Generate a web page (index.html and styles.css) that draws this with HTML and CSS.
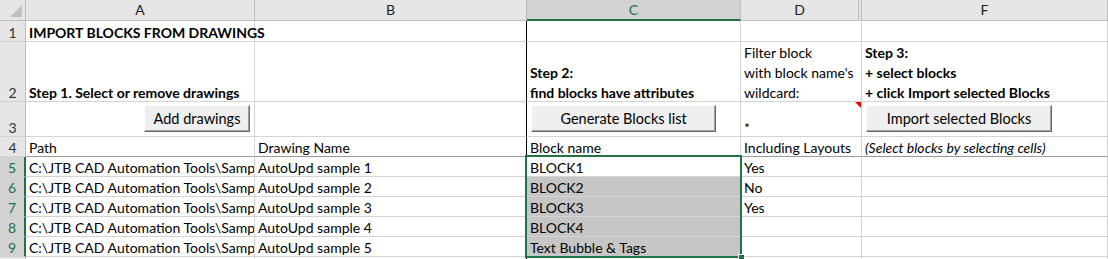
FILE: index.html
```html
<!doctype html>
<html lang="en">
<head>
    <meta charset="UTF-8">
    <title>Import blocks from drawings</title>
    <link rel="stylesheet" href="styles.css">
</head>
<body>
<div class="sheet">
    <!-- column headers -->
    <div class="corner"><span class="corner-tri"></span></div>
    <div class="colhead">A</div>
    <div class="colhead">B</div>
    <div class="colhead sel">C</div>
    <div class="colhead col-d">D</div>
    <div class="colhead">F</div>

    <!-- row 1 -->
    <div class="rowhead">1</div>
    <div class="cell bold spill">IMPORT BLOCKS FROM DRAWINGS</div>
    <div class="cell edge"></div>
    <div class="cell"></div>
    <div class="cell"></div>
    <div class="cell"></div>

    <!-- row 2 -->
    <div class="rowhead">2</div>
    <div class="cell bold">Step 1. Select or remove drawings</div>
    <div class="cell edge"></div>
    <div class="cell bold multi"><span class="lines">Step 2:<br>find blocks have attributes</span></div>
    <div class="cell multi"><span class="lines">Filter block<br>with block name's<br>wildcard:</span></div>
    <div class="cell bold multi"><span class="lines">Step 3:<br>+ select blocks<br>+ click Import selected Blocks</span></div>

    <!-- row 3 -->
    <div class="rowhead">3</div>
    <div class="cell btn-right"><button class="xl-btn btn-add">Add drawings</button></div>
    <div class="cell edge"></div>
    <div class="cell btn-left"><button class="xl-btn btn-gen">Generate Blocks list</button></div>
    <div class="cell comment">*</div>
    <div class="cell btn-left"><button class="xl-btn btn-imp">Import selected Blocks</button></div>

    <!-- row 4 -->
    <div class="rowhead">4</div>
    <div class="cell hdr">Path</div>
    <div class="cell hdr edge">Drawing Name</div>
    <div class="cell hdr">Block name</div>
    <div class="cell hdr">Including Layouts</div>
    <div class="cell hdr note">(Select blocks by selecting cells)</div>

    <!-- rows 5-9 -->
    <div class="rowhead sel">5</div>
    <div class="cell">C:\JTB CAD Automation Tools\Samples\AutoUpd sample 1.dwg</div>
    <div class="cell edge">AutoUpd sample 1</div>
    <div class="cell">BLOCK1</div>
    <div class="cell">Yes</div>
    <div class="cell"></div>

    <div class="rowhead sel">6</div>
    <div class="cell">C:\JTB CAD Automation Tools\Samples\AutoUpd sample 2.dwg</div>
    <div class="cell edge">AutoUpd sample 2</div>
    <div class="cell picked">BLOCK2</div>
    <div class="cell">No</div>
    <div class="cell"></div>

    <div class="rowhead sel">7</div>
    <div class="cell">C:\JTB CAD Automation Tools\Samples\AutoUpd sample 3.dwg</div>
    <div class="cell edge">AutoUpd sample 3</div>
    <div class="cell picked">BLOCK3</div>
    <div class="cell">Yes</div>
    <div class="cell"></div>

    <div class="rowhead sel">8</div>
    <div class="cell">C:\JTB CAD Automation Tools\Samples\AutoUpd sample 4.dwg</div>
    <div class="cell edge">AutoUpd sample 4</div>
    <div class="cell picked">BLOCK4</div>
    <div class="cell"></div>
    <div class="cell"></div>

    <div class="rowhead sel">9</div>
    <div class="cell">C:\JTB CAD Automation Tools\Samples\AutoUpd sample 5.dwg</div>
    <div class="cell edge">AutoUpd sample 5</div>
    <div class="cell picked">Text Bubble &amp; Tags</div>
    <div class="cell"></div>
    <div class="cell"></div>

    <div class="rowhead"></div>
    <div class="cell"></div>
    <div class="cell edge"></div>
    <div class="cell"></div>
    <div class="cell"></div>
    <div class="cell"></div>

    <!-- selection box over C5:C9 -->
    <div class="selection"><span class="fill-handle"></span></div>
</div>
</body>
</html>
```

FILE: styles.css
```css
body {
    margin: 0;
    background: #fff;
    font-family: Lato, "Open Sans", sans-serif;
    font-size: 14px;
    color: #000;
}

.sheet {
    position: relative;
    display: grid;
    grid-template-columns: 26px 229px 272px 214px 121px 1fr;
    grid-template-rows: 21px 21px 60px 35px 20px 20px 20px 20px 20px 20px 20px;
    width: 1108px;
    height: 259px;
    overflow: hidden;
}

/* headers */
.corner {
    position: relative;
    background: #e6e6e6;
    border-right: 1px solid #bdbdbd;
    border-bottom: 1px solid #bdbdbd;
}

.corner-tri {
    position: absolute;
    right: 3px;
    bottom: 3px;
    width: 0;
    height: 0;
    border-left: 12px solid transparent;
    border-bottom: 12px solid #c0c0c0;
}

.colhead {
    background: #e6e6e6;
    border-right: 1px solid #bdbdbd;
    border-bottom: 1px solid #bdbdbd;
    text-align: center;
    line-height: 20px;
    font-size: 14px;
    color: #222;
}

.colhead.sel {
    background: #d2d2d2;
    color: #217346;
    border-bottom: 2px solid #217346;
}

.colhead.col-d {
    border-right: 4px double #bdbdbd;
}

.rowhead {
    background: #e6e6e6;
    border-right: 1px solid #bdbdbd;
    border-bottom: 1px solid #d0d0d0;
    display: flex;
    align-items: flex-end;
    justify-content: center;
    font-size: 14px;
    line-height: 16px;
    color: #333;
}

.rowhead.sel {
    background: #d2d2d2;
    color: #217346;
    border-right: 2px solid #217346;
}

/* cells */
.cell {
    position: relative;
    display: flex;
    align-items: flex-end;
    padding: 0 3px;
    border-right: 1px solid #d4d4d4;
    border-bottom: 1px solid #d4d4d4;
    white-space: nowrap;
    overflow: hidden;
    line-height: 16px;
    min-width: 0;
}

.cell.edge {
    border-right: 1px solid #000;
}

.cell.spill {
    overflow: visible;
}

.bold {
    font-weight: bold;
}

.multi {
    overflow: visible;
}

.lines {
    line-height: 20px;
    margin-bottom: -2px;
}

.hdr {
    border-bottom: 1px solid #9a9a9a;
}

.note {
    font-style: italic;
}

.picked {
    background: #c6c6c6;
}

/* red comment marker */
.comment::after {
    content: "";
    position: absolute;
    top: 0;
    right: 0;
    border-left: 6px solid transparent;
    border-top: 6px solid #e00;
}

/* form buttons in row 3 */
.btn-right {
    justify-content: flex-end;
    align-items: flex-start;
    padding: 3px 4px 0 0;
}

.btn-left {
    align-items: flex-start;
    padding: 3px 0 0 4px;
}

.xl-btn {
    height: 27px;
    padding: 0;
    font-family: inherit;
    font-size: 14.5px;
    color: #000;
    background: #efefef;
    border: 1px solid;
    border-color: #fdfdfd #6b6b6b #6b6b6b #fdfdfd;
    box-shadow: inset -1px -1px 0 #a0a0a0;
}

.btn-add {
    width: 106px;
}

.btn-gen {
    width: 185px;
}

.btn-imp {
    width: 186px;
}

/* selected range C5:C9 */
.selection {
    position: absolute;
    left: 525px;
    top: 155px;
    width: 217px;
    height: 103px;
    box-sizing: border-box;
    border: 2px solid #217346;
    pointer-events: none;
}

.fill-handle {
    position: absolute;
    right: -5px;
    bottom: -5px;
    width: 5px;
    height: 5px;
    background: #217346;
    border: 1px solid #fff;
}
```
